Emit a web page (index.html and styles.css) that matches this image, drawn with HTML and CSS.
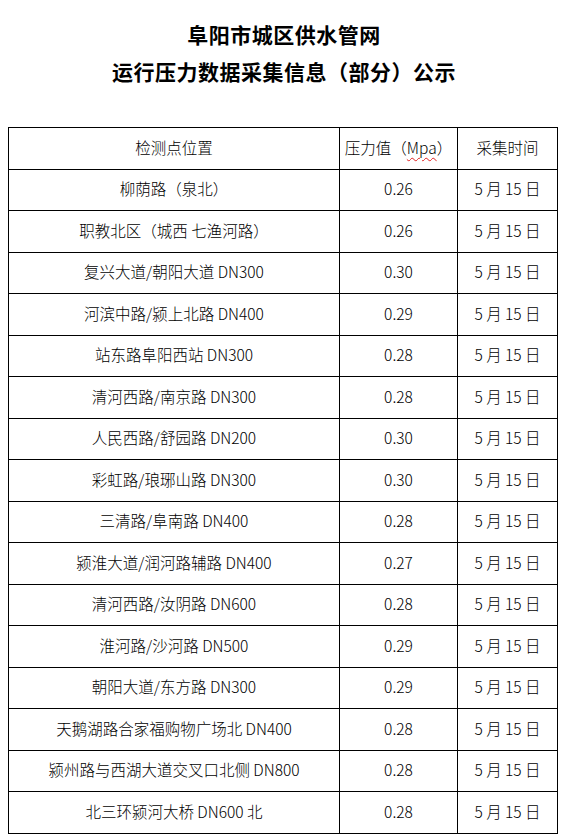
FILE: index.html
```html
<!DOCTYPE html>
<html lang="zh-CN">
<head>
<meta charset="utf-8">
<title>阜阳市城区供水管网运行压力数据采集信息（部分）公示</title>
<link rel="stylesheet" href="styles.css">
</head>
<body>
<div class="title">
  <div>阜阳市城区供水管网</div>
  <div>运行压力数据采集信息（部分）公示</div>
</div>
<table class="data">
  <colgroup><col class="c1"><col class="c2"><col class="c3"></colgroup>
  <tr><td>检测点位置</td><td>压力值（<span class="spell">Mpa</span>）</td><td>采集时间</td></tr>
  <tr><td>柳荫路（泉北）</td><td>0.26</td><td>5 月 15 日</td></tr>
  <tr><td>职教北区（城西 七渔河路）</td><td>0.26</td><td>5 月 15 日</td></tr>
  <tr><td>复兴大道/朝阳大道 DN300</td><td>0.30</td><td>5 月 15 日</td></tr>
  <tr><td>河滨中路/颍上北路 DN400</td><td>0.29</td><td>5 月 15 日</td></tr>
  <tr><td>站东路阜阳西站 DN300</td><td>0.28</td><td>5 月 15 日</td></tr>
  <tr><td>清河西路/南京路 DN300</td><td>0.28</td><td>5 月 15 日</td></tr>
  <tr><td>人民西路/舒园路 DN200</td><td>0.30</td><td>5 月 15 日</td></tr>
  <tr><td>彩虹路/琅琊山路 DN300</td><td>0.30</td><td>5 月 15 日</td></tr>
  <tr><td>三清路/阜南路 DN400</td><td>0.28</td><td>5 月 15 日</td></tr>
  <tr><td>颍淮大道/润河路辅路 DN400</td><td>0.27</td><td>5 月 15 日</td></tr>
  <tr><td>清河西路/汝阴路 DN600</td><td>0.28</td><td>5 月 15 日</td></tr>
  <tr><td>淮河路/沙河路 DN500</td><td>0.29</td><td>5 月 15 日</td></tr>
  <tr><td>朝阳大道/东方路 DN300</td><td>0.29</td><td>5 月 15 日</td></tr>
  <tr><td>天鹅湖路合家福购物广场北 DN400</td><td>0.28</td><td>5 月 15 日</td></tr>
  <tr><td>颍州路与西湖大道交叉口北侧 DN800</td><td>0.28</td><td>5 月 15 日</td></tr>
  <tr><td>北三环颍河大桥 DN600 北</td><td>0.28</td><td>5 月 15 日</td></tr>
</table>
</body>
</html>
```
FILE: styles.css
```css
html, body {
  margin: 0;
  padding: 0;
  background: #fff;
}
body {
  font-family: "Noto Sans CJK SC", "Liberation Sans", sans-serif;
  color: #000;
}
.title {
  padding-top: 16px;
  text-align: center;
  font-weight: bold;
  font-size: 21px;
  line-height: 37px;
  letter-spacing: 0.5px;
}
.data {
  margin: 37px 0 0 8px;
  border-collapse: collapse;
  table-layout: fixed;
  width: 549px;
}
.c1 { width: 331px; }
.c2 { width: 118px; }
.c3 { width: 100px; }
.data td {
  border: 1px solid #000;
  height: 41.5px;
  padding: 0 0 3px 0;
  box-sizing: border-box;
  text-align: center;
  vertical-align: middle;
  font-size: 15.5px;
  font-weight: 300;
  color: #000;
  white-space: nowrap;
}
.spell {
  text-decoration: underline wavy #e02020;
  text-decoration-thickness: 1px;
  text-underline-offset: 3px;
}
```
